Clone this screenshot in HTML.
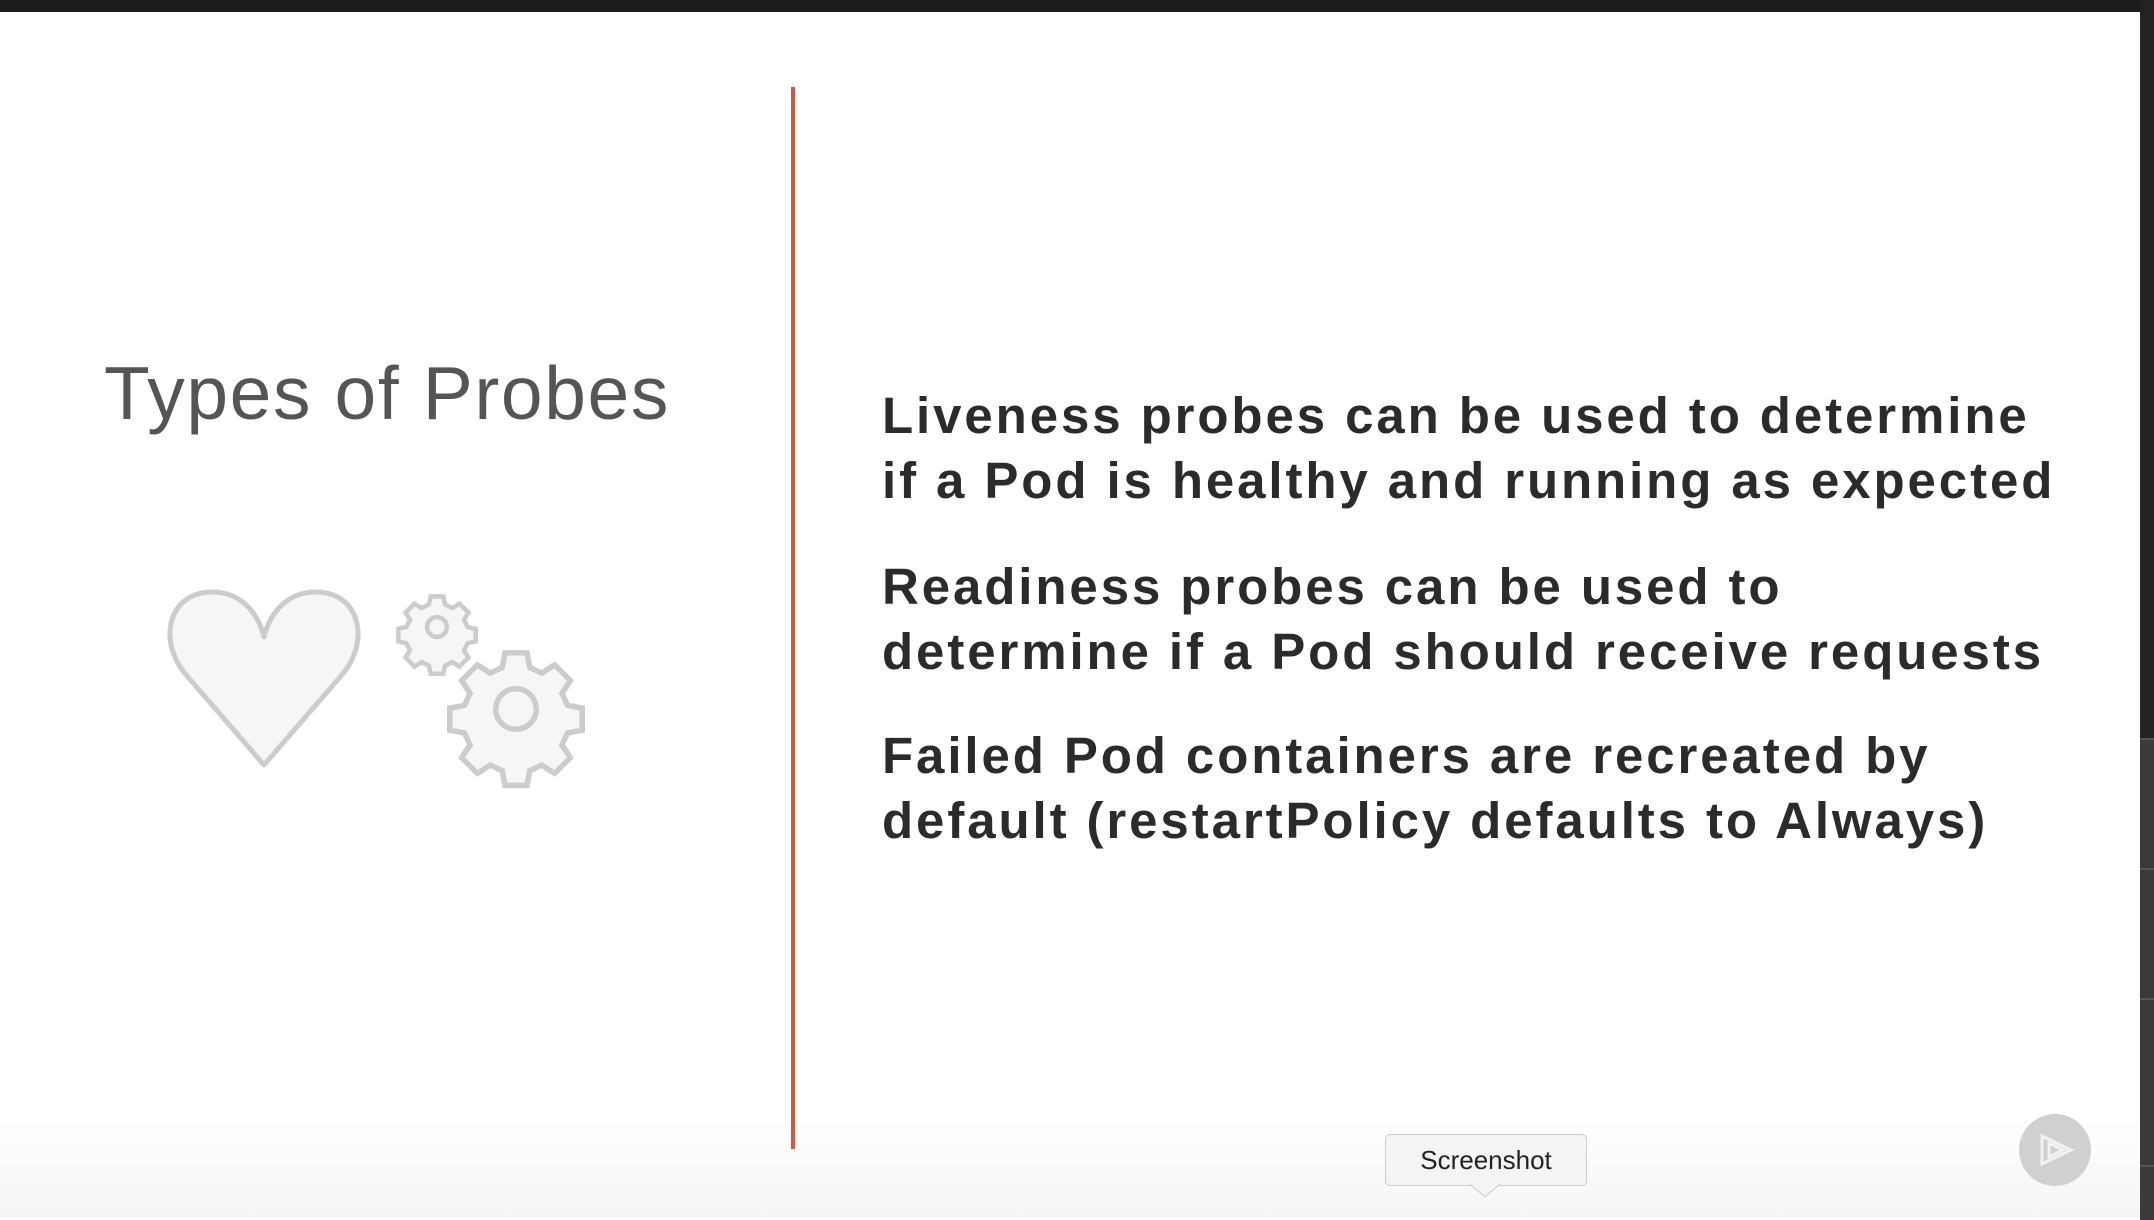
<!DOCTYPE html>
<html><head><meta charset="utf-8"><style>
html,body{margin:0;padding:0}
body{width:2154px;height:1218px;position:relative;overflow:hidden;background:#fff;font-family:"Liberation Sans",sans-serif}
.top{position:absolute;left:0;top:0;width:2154px;height:12px;background:#1c1c1c}
.rp{position:absolute;left:2140px;top:0;width:14px;height:1218px;background:#222}
.seg{position:absolute;left:2140px;width:14px;background:#3a3a3a;border-top:2px solid #555}
.bot{position:absolute;left:0;top:1120px;width:2140px;height:98px;background:linear-gradient(#fff,#f5f5f5)}
.red{position:absolute;left:791px;top:87px;width:4px;height:1062px;background:#d9553d}
.title{position:absolute;left:104px;top:350px;font-size:75px;color:#555;white-space:nowrap;letter-spacing:1.6px}
.p{position:absolute;left:882px;font-size:51px;font-weight:bold;color:#2b2b2b;line-height:65px;white-space:nowrap;letter-spacing:2.9px}
.tip{position:absolute;left:1385px;top:1134px;width:200px;height:50px;background:#f4f4f4;border:1px solid #ccc;border-radius:5px;font-size:26px;color:#222;text-align:center;line-height:50px}
</style></head><body>
<div class="bot"></div>
<div class="top"></div>
<div class="rp"></div>
<div class="seg" style="top:738px;height:128px"></div>
<div class="seg" style="top:868px;height:128px"></div>
<div class="seg" style="top:998px;height:165px"></div>
<div class="seg" style="top:1165px;height:53px"></div>
<div class="red"></div>
<div class="title">Types of Probes</div>
<svg style="position:absolute;left:0;top:0" width="800" height="900">
<path d="M264 765 L188 677 C156 642 168 592 212 592 C240 592 258 612 264 637 C270 612 288 592 316 592 C360 592 372 642 340 677 Z" fill="#f6f6f6" stroke="#ccc" stroke-width="5" stroke-linejoin="round"/>
<g transform="translate(437,627) scale(0.9)" fill="#f6f6f6" stroke="#ccc" stroke-width="5">
<path d="M-7-34h14l2 9 8 4 8-5 10 10-5 8 4 8 9 2v14l-9 2-4 8 5 8-10 10-8-5-8 4-2 9h-14l-2-9-8-4-8 5-10-10 5-8-4-8-9-2v-14l9-2 4-8-5-8 10-10 8 5 8-4z"/><circle r="11"/></g>
<g transform="translate(516,709) scale(0.92)" fill="#f6f6f6" stroke="#ccc" stroke-width="6">
<path d="M-12-61h24l3 16 13 6 14-9 17 17-9 14 6 13 16 3v24l-16 3-6 13 9 14-17 17-14-9-13 6-3 16h-24l-3-16-13-6-14 9-17-17 9-14-6-13-16-3v-24l16-3 6-13-9-14 17-17 14 9 13-6z"/><circle r="22"/></g>
</svg>
<div class="p" style="top:383px">Liveness probes can be used to determine<br>if a Pod is healthy and running as expected</div>
<div class="p" style="top:554px">Readiness probes can be used to<br>determine if a Pod should receive requests</div>
<div class="p" style="top:723px">Failed Pod containers are recreated by<br>default (restartPolicy defaults to Always)</div>
<div class="tip">Screenshot</div>
<svg style="position:absolute;left:1470px;top:1184px" width="30" height="14"><path d="M0 0 L15 13 L30 0" fill="#f4f4f4" stroke="#ccc" stroke-width="1"/></svg>
<svg style="position:absolute;left:2017px;top:1112px" width="76" height="76"><circle cx="38" cy="38" r="36" fill="#d0d0d0"/><path d="M25 24 L54 38 L25 52 Z M32 31 L46 38 L32 45 Z" fill="none" stroke="#f2f2f2" stroke-width="3"/></svg>
</body></html>
